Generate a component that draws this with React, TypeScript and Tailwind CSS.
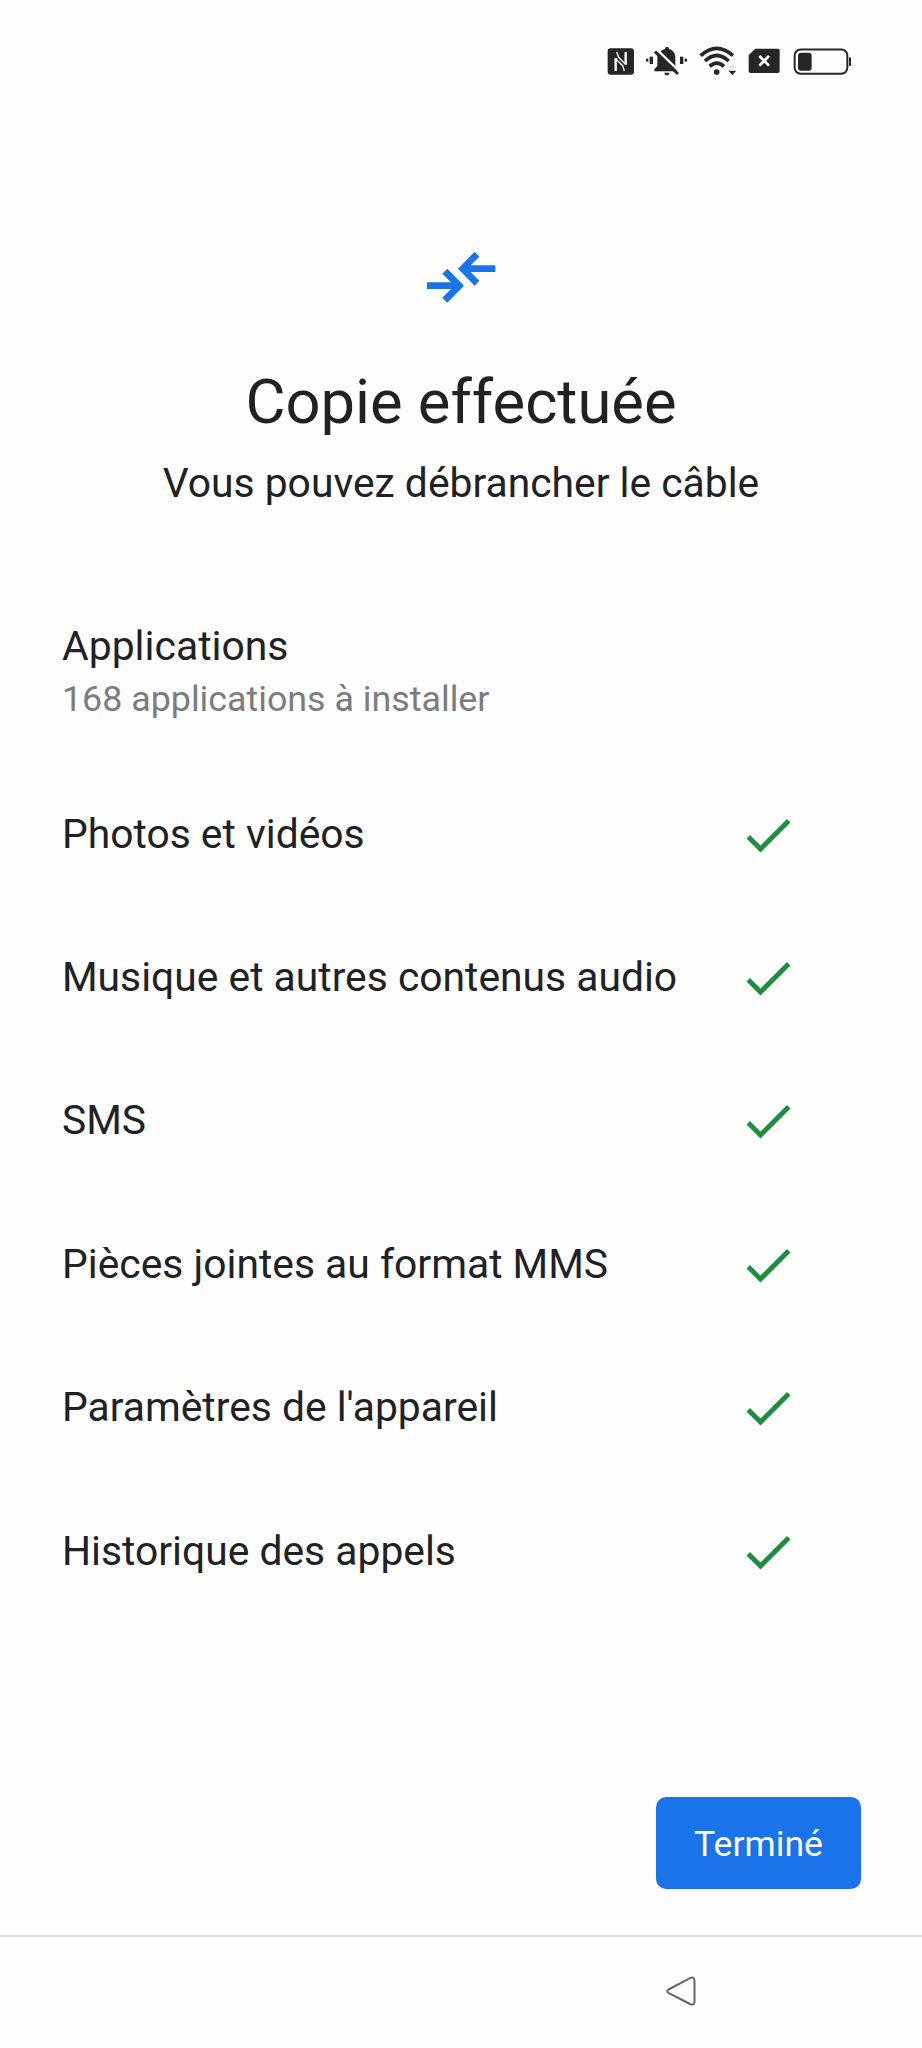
import React from 'react';

const ITEMS = [
  'Photos et vidéos',
  'Musique et autres contenus audio',
  'SMS',
  'Pièces jointes au format MMS',
  "Paramètres de l'appareil",
  'Historique des appels',
];

const StatusBar: React.FC = () => (
  <div className="flex justify-end pt-[46px] pr-[70px] text-[#262626]">
    {/* NFC */}
    <svg className="w-[30px] h-8 mr-2" viewBox="48 48 90 96" fill="none" stroke="#fff">
      <rect x="53" y="55" width="79" height="79" rx="9" fill="currentColor" stroke="none" />
      <path d="M77 84V123M107 66V104" strokeWidth="7" />
      <path d="M80 66L86 82L105 101M77 86L98 107L103 123" strokeWidth="4" />
    </svg>

    {/* Vibrate, bell off */}
    <svg className="w-11 h-8 mr-2.5" viewBox="162 48 132 96" fill="currentColor">
      <path d="M231 50c4 0 6 3 6 7 13 4 19 13 19 26v25l9 10v6h-72v-6l9-10V83c0-13 10-22 23-26 0-4 2-7 6-7z" />
      <path d="M223 128h15c0 5-3 8-7.500 8s-7.500-3-7.500-8z" />
      <rect x="168" y="86" width="7" height="9" />
      <rect x="179" y="80" width="10" height="22" />
      <rect x="270" y="80" width="10" height="22" />
      <rect x="284" y="86" width="7" height="9" />
      <path d="M200 58L271 127" stroke="#fff" strokeWidth="7" />
      <path d="M195 65L264 132" stroke="currentColor" strokeWidth="9" />
    </svg>

    {/* Wi-Fi */}
    <svg className="w-10 h-8 mr-2.5" viewBox="324 48 120 96" fill="none" stroke="currentColor" strokeWidth="11">
      <path d="M332 77Q380 33 429 77" />
      <path d="M345 93Q380 60 416 93" />
      <path d="M359 109Q380 90 402 109" />
      <circle cx="380" cy="126" r="8.500" fill="currentColor" stroke="none" />
      <path d="M427 101l12 14h-24z" fill="#e2e2e2" stroke="none" />
      <path d="M415 122h24l-12 13z" fill="currentColor" stroke="none" />
    </svg>

    {/* SIM missing */}
    <svg className="w-8 h-8 mr-3" viewBox="54 48 96 96" fill="none">
      <path d="M76 56H143Q149 56 149 62V123Q149 129 143 129H62Q56 129 56 123V75z" fill="currentColor" />
      <path d="M88 78L117 107M117 78L88 107" stroke="#fff" strokeWidth="8" />
    </svg>

    {/* Battery */}
    <svg className="w-[60px] h-8" viewBox="186 48 180 96" fill="none">
      <rect x="194" y="58.500" width="158" height="73" rx="18" stroke="currentColor" strokeWidth="6" />
      <rect x="204" y="68" width="41" height="54" rx="9" fill="currentColor" />
      <rect x="357" y="82" width="6" height="26" rx="2" fill="currentColor" />
    </svg>
  </div>
);

const TransferIcon: React.FC = () => (
  <svg className="w-[70px] h-[54px]" viewBox="48 45 210 162" fill="#1a73e8">
    <path d="M112 101L162 152L112 203L97 188L123 162H51V142H123L97 116z" />
    <path d="M194 50L208 65L182 91H256V111H182L208 137L194 152L144 101z" />
  </svg>
);

const CheckIcon: React.FC = () => (
  <svg className="w-[60px] h-[60px]" viewBox="0 0 24 24" fill="#1e8e3e">
    <path d="M9 16.200L4.800 12l-1.400 1.400L9 19 21 7l-1.400-1.400z" />
  </svg>
);

export default function App() {
  return (
    <div className="w-[922px] h-[2048px] overflow-hidden flex flex-col bg-[#fefefe] text-[#202124] font-['Roboto',sans-serif]">
      <StatusBar />

      <header className="flex flex-col items-center mt-[172px]">
        <TransferIcon />
        <h1 className="mt-[62px] text-[61.5px] leading-[72px]">Copie effectuée</h1>
        <p className="mt-[21px] text-[40.8px] leading-[48px]">Vous pouvez débrancher le câble</p>
      </header>

      <main className="mt-[115px] pl-[62px] pr-[124px]">
        <h2 className="text-[40.9px] leading-[48px]">Applications</h2>
        <p className="mt-2 text-[35.8px] leading-[42px] text-[#7b7c7e]">168 applications à installer</p>

        <ul className="mt-[43px]">
          {ITEMS.map((item) => (
            <li key={item} className="flex items-center justify-between h-[143.4px]">
              <span className="pb-[2px] text-[40.8px] leading-[48px]">{item}</span>
              <CheckIcon />
            </li>
          ))}
        </ul>
      </main>

      <div className="flex justify-end mt-[174px] pr-[61px]">
        <button className="w-[205px] h-[92px] pt-0.5 rounded-[10px] bg-[#1a73e8] text-white text-[35.6px]">
          Terminé
        </button>
      </div>

      <nav className="flex-1 mt-[46px] border-t-2 border-[#e0e0e0] pt-[38px] pl-[664px]">
        <svg className="w-[34px] h-[34px]" viewBox="0 0 34 34" fill="none" stroke="#666" strokeWidth="2">
          <path d="M4.500 14.500L25.500 3.300Q30.500 1 30.500 6V26.500Q30.500 31 26 29L4.500 17.800Q2 16.200 4.500 14.500z" />
        </svg>
      </nav>
    </div>
  );
}
